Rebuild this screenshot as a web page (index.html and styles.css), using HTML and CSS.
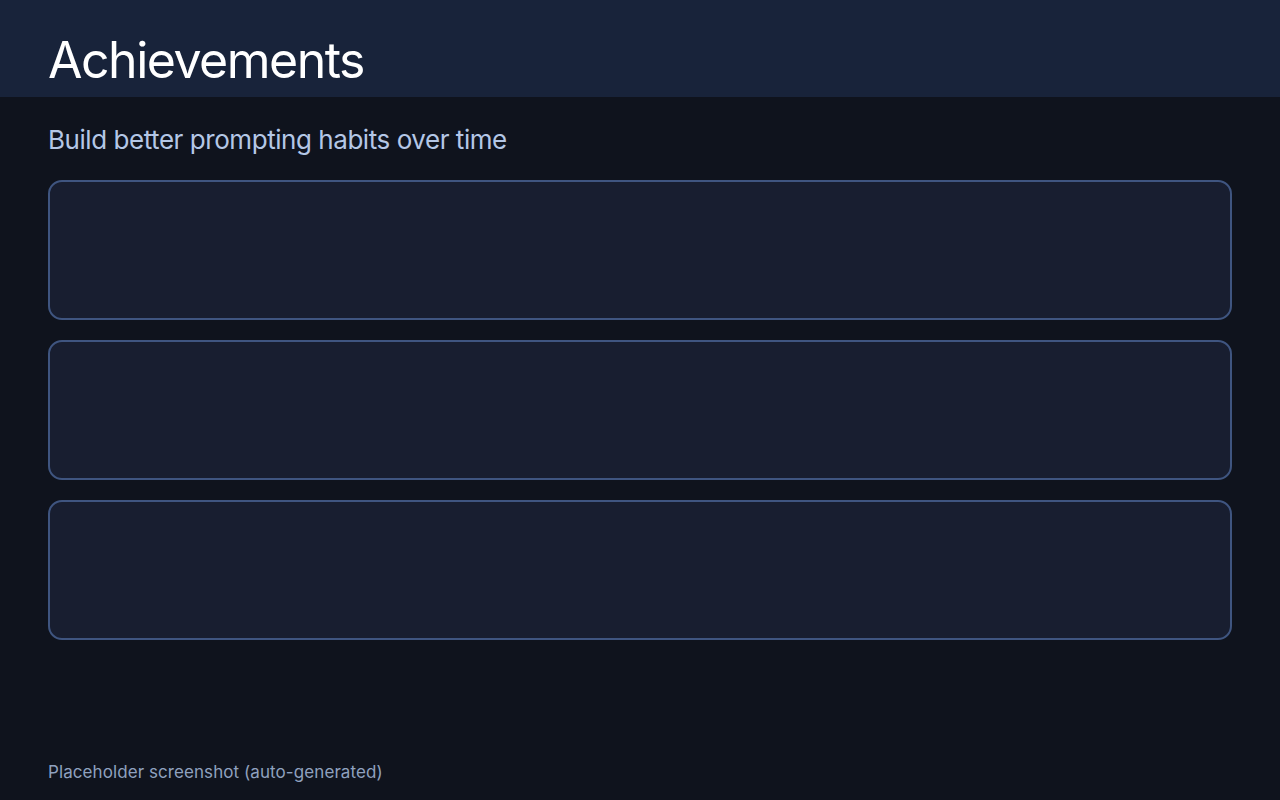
FILE: index.html
```html
<!DOCTYPE html>
<html lang="en">
<head>
<meta charset="utf-8">
<title>Achievements</title>
<link rel="stylesheet" href="styles.css">
</head>
<body>
<div class="page">
  <header class="topbar">
    <h1 class="title">Achievements</h1>
  </header>
  <main class="content">
    <p class="subtitle">Build better prompting habits over time</p>
    <div class="cards">
      <div class="card"></div>
      <div class="card"></div>
      <div class="card"></div>
    </div>
  </main>
  <footer class="footer">Placeholder screenshot (auto-generated)</footer>
</div>
</body>
</html>
```
FILE: styles.css
```css
* { box-sizing: border-box; }
html, body {
  margin: 0;
  padding: 0;
  height: 100%;
}
body {
  background: #0f131d;
  font-family: Inter, "Noto Sans", sans-serif;
  color: #ffffff;
}
.page {
  height: 800px;
  display: flex;
  flex-direction: column;
}
.topbar {
  background: #18233a;
  height: 97px;
  padding: 0 48px;
  display: flex;
  align-items: flex-end;
}
.title {
  margin: 0 0 6px 0;
  font-size: 50px;
  font-weight: 400;
  line-height: 62px;
  letter-spacing: -1.5px;
  color: #ffffff;
}
.content {
  flex: 1;
  padding: 0 48px;
}
.subtitle {
  margin: 25px 0 22px;
  font-size: 26px;
  line-height: 36px;
  color: #b4c7e6;
  letter-spacing: -0.45px;
}
.cards {
  display: flex;
  flex-direction: column;
  gap: 20px;
}
.card {
  height: 140px;
  background: #181e30;
  border: 2px solid #3f5580;
  border-radius: 14px;
}
.footer {
  padding: 0 48px 16px;
  font-size: 17px;
  line-height: 24px;
  letter-spacing: 0.08px;
  color: #8fa1bf;
}
```
